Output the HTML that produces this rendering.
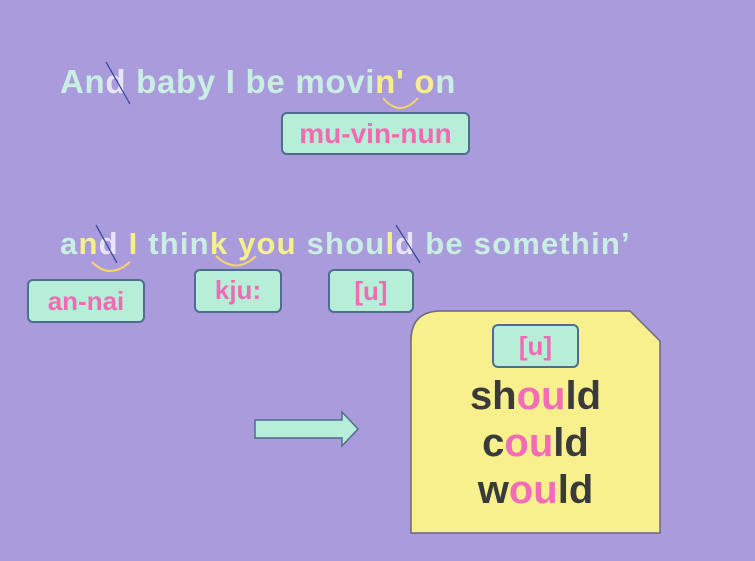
<!DOCTYPE html>
<html><head><style>
body{margin:0;width:755px;height:561px;background:#a99bdc;position:relative;overflow:hidden;font-family:"Liberation Sans",sans-serif}
.t{position:absolute;white-space:nowrap;color:#c9efe2;font-weight:bold}
.y{color:#f6ef8c}.w{color:#eae4fb}
.box{position:absolute;background:#b7eed7;border:2px solid #4f6d8e;border-radius:6px;color:#f06ab4;text-align:center;box-sizing:border-box;font-size:26px;font-weight:bold}
.wd{position:absolute;left:411px;width:249px;text-align:center;font-size:40px;font-weight:bold;color:#3a3a3a}
.p{color:#f36cb8}
</style></head><body>
<div class="t" style="left:60px;top:63px;font-size:33px;letter-spacing:0.7px">An<span class="w">d</span> baby I be movi<span class="y">n' o</span>n</div>
<div class="t" style="left:60px;top:226px;font-size:31px;letter-spacing:1.2px">a<span class="y">n</span><span class="w">d</span> <span class="y">I</span> thin<span class="y">k you</span> shou<span class="y">l</span><span class="w">d</span> be somethin’</div>
<svg style="position:absolute;left:0;top:0" width="755" height="561">
<g fill="none" stroke="#3a4a9a" stroke-width="1.3"><line x1="106" y1="62" x2="130" y2="104"/><line x1="96" y1="225" x2="117" y2="263"/><line x1="396" y1="225" x2="420" y2="263"/></g>
<g fill="none" stroke="#f6d46a" stroke-width="2"><path d="M383 98 Q400 118 418 98"/><path d="M92 262 Q110 280 130 262"/><path d="M216 256 Q236 275 256 256"/></g>
<path d="M441 311 H630 L660 341 V533 H411 V341 Q411 311 441 311Z" fill="#f8f08c" stroke="#6a6a7a" stroke-width="1.5"/>
<path d="M255 420 H342 V412 L358 429 L342 446 V438 H255Z" fill="#b7eed7" stroke="#4f6d8e" stroke-width="1.5"/>
</svg>
<div class="box" style="left:281px;top:112px;width:189px;height:43px;line-height:39px;font-size:28px">mu-vin-nun</div>
<div class="box" style="left:27px;top:279px;width:118px;height:44px;line-height:40px">an-nai</div>
<div class="box" style="left:194px;top:269px;width:88px;height:44px;line-height:38px">kju:</div>
<div class="box" style="left:328px;top:269px;width:86px;height:44px;line-height:40px">[u]</div>
<div class="box" style="left:492px;top:324px;width:87px;height:44px;line-height:40px">[u]</div>
<div class="wd" style="top:374px">sh<span class="p">ou</span>ld</div>
<div class="wd" style="top:421px">c<span class="p">ou</span>ld</div>
<div class="wd" style="top:468px">w<span class="p">ou</span>ld</div>
</body></html>
